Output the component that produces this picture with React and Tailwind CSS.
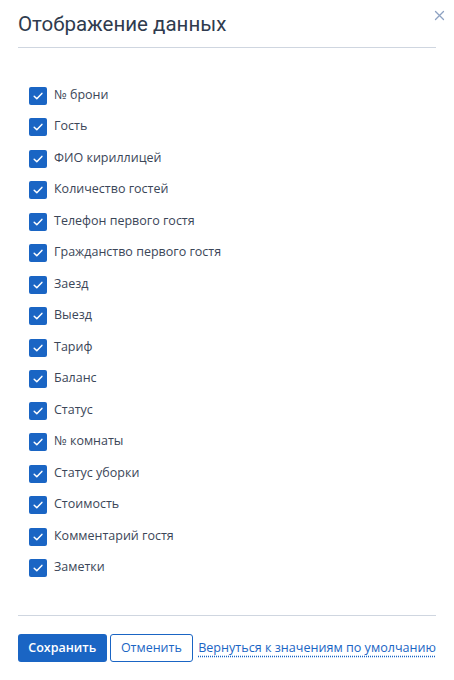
import React, { useState } from 'react';

const columns = [
  '№ брони',
  'Гость',
  'ФИО кириллицей',
  'Количество гостей',
  'Телефон первого гостя',
  'Гражданство первого гостя',
  'Заезд',
  'Выезд',
  'Тариф',
  'Баланс',
  'Статус',
  '№ комнаты',
  'Статус уборки',
  'Стоимость',
  'Комментарий гостя',
  'Заметки',
];

function CheckRow({ label, checked, onToggle }) {
  return (
    <label className="flex items-center h-[31.5px] cursor-pointer select-none">
      <span
        onClick={onToggle}
        className={`flex items-center justify-center w-[18px] h-[18px] rounded-[2px] ml-[11px] ${checked ? 'bg-[#1a65c4]' : 'border border-[#9aa9bf] bg-white'}`}
      >
        {checked && (
          <svg width="12" height="12" viewBox="0 0 12 12" fill="none">
            <path d="M2.2 6.3 L4.8 8.8 L9.9 3.4" stroke="white" strokeWidth="1.5" strokeLinecap="round" strokeLinejoin="round" />
          </svg>
        )}
      </span>
      <span className="ml-[7px] text-[12.5px] text-[#3b4658] leading-none -mt-[2px]">{label}</span>
    </label>
  );
}

export default function App() {
  const [checked, setChecked] = useState(columns.map(() => true));

  const toggle = (i) => {
    setChecked(checked.map((v, j) => (j === i ? !v : v)));
  };

  return (
    <div className="relative w-[454px] h-[680px] bg-white font-['Open_Sans',sans-serif] px-[18px]">
      <button className="absolute right-[9px] top-[10px] text-[#8ea2c2]">
        <svg width="11" height="11" viewBox="0 0 11 11" fill="none">
          <path d="M1.5 1.5 L9.5 9.5 M9.5 1.5 L1.5 9.5" stroke="currentColor" strokeWidth="1.3" strokeLinecap="round" />
        </svg>
      </button>

      <div className="pt-[10px] h-[48px] border-b border-[#cfd6e0]">
        <h2 className="font-['Roboto',sans-serif] text-[20.5px] leading-[28px] text-[#2f3b4e]">Отображение данных</h2>
      </div>

      <div className="pt-[32px] h-[567px]">
        {columns.map((c, i) => (
          <CheckRow key={c} label={c} checked={checked[i]} onToggle={() => toggle(i)} />
        ))}
      </div>

      <div className="border-t border-[#cfd6e0] pt-[18px] flex items-center whitespace-nowrap">
        <button className="h-[28px] w-[89px] rounded-[3px] bg-[#1a65c4] text-white text-[12.5px] font-semibold">
          Сохранить
        </button>
        <button className="ml-[3px] h-[28px] w-[84px] rounded-[3px] border border-[#1a65c4] text-[#1a65c4] text-[12.5px]">
          Отменить
        </button>
        <a href="#" className="ml-[5px] text-[12.6px] text-[#1a65c4] underline decoration-dotted underline-offset-[4px] decoration-[#1a65c4]">
          Вернуться к значениям по умолчанию
        </a>
      </div>
    </div>
  );
}
